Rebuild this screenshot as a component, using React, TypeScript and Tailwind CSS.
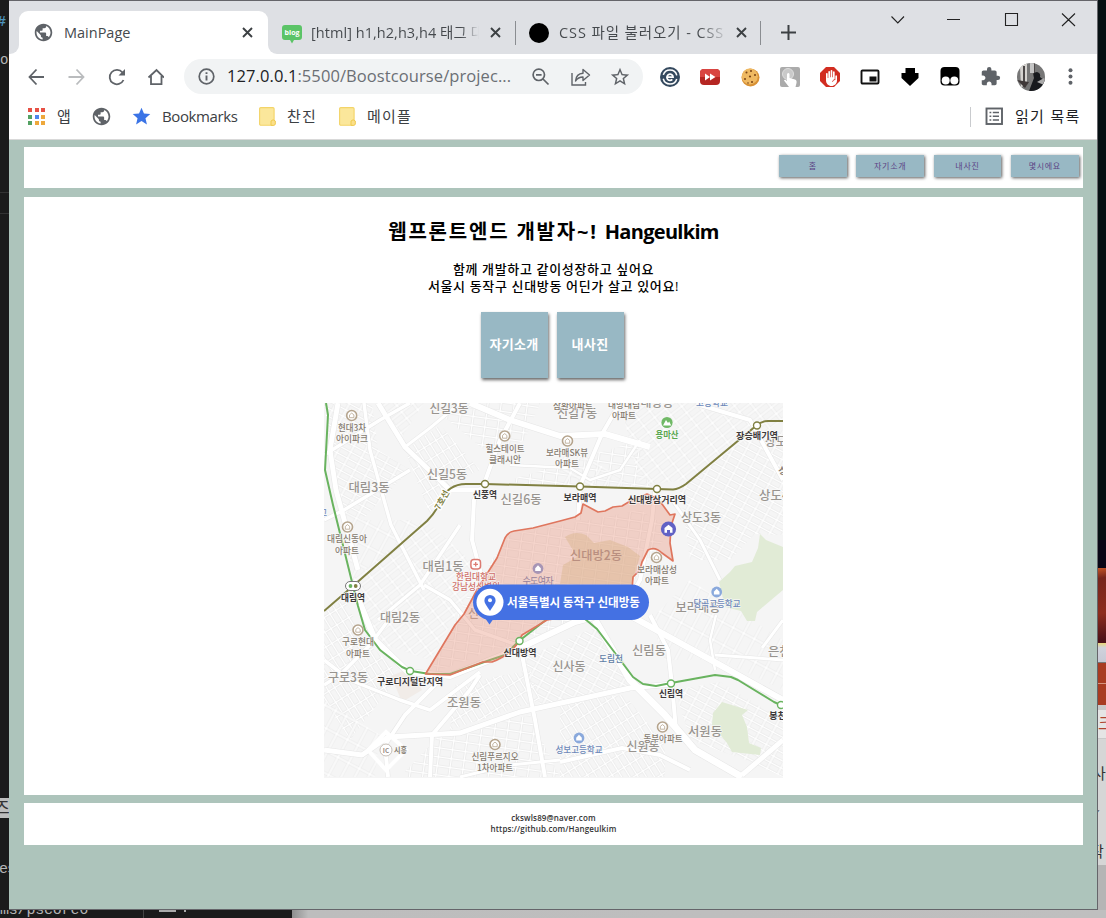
import React from "react";
import { MdPublic, MdStar, MdStarBorder, MdExtension, MdFrontHand } from "react-icons/md";

const kr = "font-['Open_Sans','Noto_Sans_CJK_KR',sans-serif]";

type LabelProps = { x: number; y: number; w: number; t: string; s?: number; c?: string; b?: boolean; start?: boolean };

function Label({ x, y, w, t, s = 9, c = "#857b70", b = false, start = false }: LabelProps) {
  return (
    <text
      x={x} y={y + s * 0.36} fontSize={s} fill={c} fontWeight={b ? 700 : 500}
      textAnchor={start ? "start" : "middle"} textLength={w} lengthAdjust="spacingAndGlyphs"
      stroke="#fafafa" strokeOpacity={0.8} strokeWidth={1.6} paintOrder="stroke" strokeLinejoin="round"
    >
      {t}
    </text>
  );
}

const GRAY = "#98948f";
const BLACK = "#3d3a3a";
const BLUE = "#6d88b9";

const districts: [number, number, number, string][] = [
  [449, 408, 39, "신길3동"], [447, 474, 40, "신길5동"], [521, 499, 41, "신길6동"], [369, 487, 41, "대림3동"],
  [443, 566, 41, "대림1동"], [577, 413, 40, "신길7동"], [701, 517, 40, "상도3동"], [400, 617, 40, "대림2동"],
  [348, 677, 40, "구로3동"], [464, 702, 34, "조원동"], [569, 666, 33, "신사동"], [698, 607, 45, "보라매동"],
  [649, 650, 34, "신림동"], [705, 731, 34, "서원동"], [643, 746, 33, "신원동"], [657, 402, 33, "대방동"],
];
const places: [number, number, number, string][] = [
  [352, 428, 28, "현대3차"], [352, 439, 32, "아이파크"], [505, 448.5, 39, "힐스테이트"], [505, 459.5, 32, "클래시안"],
  [347, 539, 40, "대림신동아"], [347, 550.5, 24, "아파트"], [573, 406, 40, "삼환아파트"], [624, 405, 32, "대방대림"],
  [624, 416, 24, "아파트"], [567, 453, 42, "보라매SK뷰"], [567, 464, 24, "아파트"], [657, 569.5, 40, "보라매삼성"],
  [657, 581, 24, "아파트"], [358, 642, 32, "구로현대"], [358, 653.5, 24, "아파트"], [495, 757, 47, "신림푸르지오"],
  [495, 768, 36, "1차아파트"], [663, 739, 39, "동부아파트"],
];
const stations: [number, number, number, string][] = [
  [485, 495, 24, "신풍역"], [580, 497.5, 33, "보라매역"], [657, 499.5, 58, "신대방삼거리역"], [757, 436, 42, "장승배기역"],
  [353, 598, 24, "대림역"], [410, 682, 66, "구로디지털단지역"], [520, 652.5, 33, "신대방역"], [671, 694, 24, "신림역"],
];
const homes: [number, number][] = [
  [351.7, 415.5], [504.7, 436], [347.5, 527], [358, 630], [495, 744.5], [567.5, 441], [656.5, 557.5], [662.5, 727],
];
const schools: [number, number][] = [[538, 568.5], [716.7, 592], [579, 738]];

const blocks: [string, string][] = [
  ["324,403 372,403 378,450 410,470 362,520 340,510", "a"],
  ["376,403 424,403 400,440", "b"],
  ["405,450 440,425 480,470 450,484 430,515", "c"],
  ["428,403 540,403 525,440 490,455", "d"],
  ["510,480 640,440 650,488 520,484", "d"],
  ["620,403 783,403 783,420 690,480 640,485", "b"],
  ["680,490 757,430 783,430 783,535 755,534 730,560 690,560", "a"],
  ["345,585 425,520 470,560 470,590 430,660 385,645", "b"],
  ["340,510 362,520 425,520 353,580", "e"],
  ["324,610 345,600 365,640 400,675 350,740 324,700", "c"],
  ["324,700 380,735 375,777 324,777", "e"],
  ["470,590 510,535 640,510 672,530 640,570 620,610 520,640 430,674", "d"],
  ["520,660 600,625 640,690 540,705", "a"],
  ["455,685 530,670 540,700 450,730", "c"],
  ["400,777 440,735 530,715 560,777", "d"],
  ["650,620 690,580 783,640 783,690 720,660 665,660", "e"],
  ["675,690 720,682 783,720 783,777 745,760 690,740", "a"],
  ["560,700 625,695 665,745 665,777 560,777", "c"],
  ["560,440 640,490 560,485", "e"],
];

const roads: [string, number][] = [
  ["M338 403 L330 450 L336 490 L358 570", 5],
  ["M364 403 L370 450 L391 525 L424 590", 3.5],
  ["M324 455 L380 420 L410 403", 3.5],
  ["M378 403 L405 447 L450 490 L480 490", 5],
  ["M405 447 L430 428 L460 403", 3],
  ["M470 403 L510 420 L560 436 L605 434 L650 447", 6],
  ["M520 403 L500 440 L484 484 L474 500 L472 540 L484 585", 4],
  ["M510 465 L570 468 L590 480 L620 470 L640 440", 2.5],
  ["M620 403 L602 434 L580 486 L578 520", 4],
  ["M324 520 L344 510 L410 470", 3.5],
  ["M378 620 L420 585 L460 525", 3.5],
  ["M353 586 L375 640 L408 672 L450 676 L520 648 L575 622 L620 610 L720 665 L783 700", 6],
  ["M424 585 L450 600 L475 630 L520 646", 3.5],
  ["M324 685 L340 675 L370 645 L390 618", 3.5],
  ["M324 660 L350 680 L400 700 L430 710 L480 672", 3.5],
  ["M324 750 L362 755 L388 737 L460 733 L520 712 L630 688 L672 684", 5],
  ["M388 777 L385 745 L405 715 L440 680", 4],
  ["M430 777 L432 735 L470 690 L480 675", 4],
  ["M522 655 L535 720 L545 777", 4],
  ["M595 620 L630 680 L665 715 L695 750 L742 777", 7],
  ["M650 615 L668 650 L672 685 L676 730", 4],
  ["M560 762 L622 748 L660 755 L690 770", 4],
  ["M742 775 L783 740", 5],
  ["M715 670 L710 640 L716 615", 2.5],
  ["M715 655 L783 660", 3],
  ["M783 620 L762 648", 3],
  ["M700 405 L750 420 L783 480", 4],
  ["M655 490 L652 520 L640 580 L620 615", 4],
  ["M672 500 L700 540 L720 580", 3],
  ["M460 777 L510 765 L560 760", 3],
];

const boundary =
  "M425.5 674 L455 625 L464 614 L478 588 L497 558 L505 538 Q508 532 514 531 L533 528 L560 521 L575 517 L581 513 L583 504 L598 512 L605 511 L613 507 L622 506 L632 500 L647 494 L654 497 L662 504 L670 515 L675 514 L671 526 L670 543 L673 561 L662 553 Q655 546 648 550 L642 562 L640 570 L633 577 L632 590 L600 612 L547 620 L522 635 L518 643 Q510 655 492 662 L483 662 L450 675Z";

const patterns: [string, number, number, number][] = [
  ["a", 28, 7, 12], ["b", -38, 8, 14], ["c", 58, 7, 13], ["d", 8, 9, 13], ["e", -62, 12, 20],
];

function MapPicture() {
  return (
    <svg
      className="mt-[25px] block h-[375px] w-[459px] font-['Noto_Sans_CJK_KR',sans-serif]"
      viewBox="324 403 459 375"
    >
      <defs>
        {patterns.map(([id, r, h, w]) => (
          <pattern key={id} id={`grid-${id}`} width={w} height={h} patternUnits="userSpaceOnUse" patternTransform={`rotate(${r})`}>
            <path d={`M0 ${h / 2}H${w} M${w / 2} 0V${h}`} stroke="#e3e3e3" strokeWidth="2.6" fill="none" />
            <path d={`M0 ${h / 2}H${w} M${w / 2} 0V${h}`} stroke="#ffffff" strokeWidth="1.5" fill="none" />
          </pattern>
        ))}
      </defs>
      <rect x="324" y="403" width="459" height="375" fill="#f5f5f5" />
      {blocks.map(([p, g], i) => <polygon key={i} points={p} fill={`url(#grid-${g})`} />)}
      <path d="M391 676 L410 668 L422 690 L402 702Z" fill="#f1ece8" />
      <path d="M760 534 L766 540 L783 547 V590 L757 612 L755 621 L747 621 L741 611 L725 607 L719 582 L730 572 L735 566 L752 562 L758 548Z M722 702 L748 710 L742 715 L747 727 L749 743 L761 748 L760 755 L732 752 L727 743 L712 725 L713 713Z" fill="#e1ebd6" />
      {roads.map(([d, w], i) => <path key={i} d={d} fill="none" stroke="#e6e6e6" strokeWidth={w + 1} strokeLinejoin="round" />)}
      {roads.map(([d, w], i) => <path key={i} d={d} fill="none" stroke="#fff" strokeWidth={w} strokeLinejoin="round" />)}
      <path d="M386 732 L406 750 L386 770 L368 750Z" fill="none" stroke="#fff" strokeWidth="4" />

      <g fill="none" strokeWidth="2" strokeLinejoin="round">
        <path stroke="#69b35f" d="M326 403 L328 415 L325 470 L333 505 L353 586 L358 606 L365 630 L380 650 L402 667 L411 671 L430 674 L450 674 L490 660 L505 655 L519 641 L547 619 L585 619 L597 629 L633 677 L643 684 L656 686 L671 683 L715 675 L731 677 L738 680 L774 702 L783 706" />
        <path stroke="#808042" d="M324 611 L353 586 L427 521 Q436 512 440 502 Q448 484 466 484 L485 484 L580 486.5 L657 489 L673 489.5 Q679 489 686 484 L757 425 Q762 421 768 421 H783" />
      </g>
      <path d={boundary} fill="#e9967f" fillOpacity=".4" />
      <path d="M565 537 Q575 530 586 535 L594 543 L610 540 L628 547 L640 556 L632 584 H560 L563 565 L577 557Z" fill="#d6b181" fillOpacity=".38" />
      <path d={boundary} fill="none" stroke="#df765e" strokeWidth="1.7" strokeLinejoin="round" />

      {districts.map(([x, y, w, t]) => <Label key={t} x={x} y={y} w={w} t={t} s={12.5} c={GRAY} />)}
      <Label x={765} y={441} w={28} t="상도1" s={12.5} c={GRAY} start />
      <Label x={759} y={495} w={30} t="상도4" s={12.5} c={GRAY} start />
      <Label x={768} y={651} w={34} t="은천동" s={12.5} c={GRAY} start />
      <Label x={778} y={471} w={24} t="상도" s={9} start />
      <text x="596" y="560" fontSize="12.5" fill="#b98f80" textAnchor="middle" textLength="52" lengthAdjust="spacingAndGlyphs" fontWeight="500">신대방2동</text>
      <text x="468" y="618" fontSize="12" fill="#b98f80">신대방1동</text>
      {places.map(([x, y, w, t], i) => <Label key={i} x={x} y={y} w={w} t={t} />)}
      <Label x={476} y={576.5} w={40} t="한림대학교" c="#cf7069" />
      <Label x={476} y={587} w={48} t="강남성심병원" c="#cf7069" />
      <text x="538" y="584" fontSize="9" fill="#97819a" textAnchor="middle" textLength="31">수도여자</text>
      <Label x={712} y={403} w={32} t="고등학교" c={BLUE} />
      <Label x={717} y={604} w={47} t="당곡고등학교" c={BLUE} />
      <Label x={579} y={750} w={47} t="성보고등학교" c={BLUE} />
      <Label x={611} y={659} w={24} t="도림천" c="#5f7da6" />
      <Label x={667} y={434.5} w={23} t="용마산" c="#5aa851" b />
      <Label x={320} y={513} w={7} t="고" c={BLUE} start />

      {homes.map(([x, y]) => (
        <g key={x}>
          <circle cx={x} cy={y} r="5" fill="#fff" stroke="#b5a48d" strokeWidth="1.6" />
          <path d={`M${x - 2.2} ${y + 2.2} V${y - 0.6} L${x} ${y - 2.4} L${x + 2.2} ${y - 0.6} V${y + 2.2}Z`} fill="none" stroke="#b5a48d" strokeWidth=".8" />
        </g>
      ))}
      {schools.map(([x, y]) => (
        <g key={x}>
          <circle cx={x} cy={y} r="5.4" fill={x === 538 ? "#a795b5" : "#8aa9dc"} />
          <path d={`M${x - 2.8} ${y + 2.6} V${y - 0.2} L${x} ${y - 3.2} L${x + 2.8} ${y - 0.2} V${y + 2.6}Z`} fill="#fff" />
        </g>
      ))}
      <circle cx="667" cy="422.5" r="5.6" fill="#70b966" />
      <path d="M663 425.5 L666 420 L668 423 L669.2 421.5 L671.2 425.5Z" fill="#fff" />
      <rect x="470.9" y="559.4" width="9.6" height="9.6" rx="3" fill="#fff" stroke="#dc7b72" strokeWidth="1.5" />
      <path d="M475.7 562 V566.6 M473.4 564.3 H478" stroke="#dc7b72" strokeWidth="1.3" />

      {[[485, 484], [580, 486.5], [657, 489], [757, 425.5]].map(([x, y]) => <circle key={x} cx={x} cy={y} r="3.5" fill="#fff" stroke="#808042" strokeWidth="1.4" />)}
      {[[410, 671], [519.5, 641], [671, 683.5], [781, 705]].map(([x, y]) => <circle key={x} cx={x} cy={y} r="3.5" fill="#fff" stroke="#69b35f" strokeWidth="1.4" />)}
      <rect x="345.5" y="581.5" width="15" height="9" rx="4.5" fill="#fff" stroke="#777" strokeWidth="1" />
      <circle cx="350.5" cy="586" r="1.9" fill="#69b35f" /><circle cx="355.7" cy="586" r="1.9" fill="#808042" />
      {stations.map(([x, y, w, t]) => <Label key={t} x={x} y={y} w={w} t={t} c={BLACK} b />)}
      <Label x={769} y={716} w={26} t="봉천역" c={BLACK} b start />
      <g transform="translate(442 500) rotate(-61)">
        <text y="3" fontSize="8.5" fontWeight="700" fill="#80803f" stroke="#fff" strokeWidth="2.5" paintOrder="stroke" textAnchor="middle">7호선</text>
      </g>
      <circle cx="386" cy="750" r="6" fill="#fff" stroke="#c5bdb5" />
      <text x="386" y="752.5" fontSize="6.5" fontWeight="700" fill="#958a80" textAnchor="middle">IC</text>
      <Label x={400.5} y={750} w={13} t="시흥" s={8} b />

      <circle cx="668.5" cy="529" r="7.6" fill="#6162c5" />
      <path d="M664.5 532.8 V528 L668.5 524.8 L672.5 528 V532.8 H670 V530 H667 V532.8Z" fill="#fff" />
      <path d="M485 618 L489.5 624.5 L494 618Z" fill="#4471e3" />
      <rect x="473" y="584.5" width="176" height="35.5" rx="17.7" fill="#4471e3" />
      <circle cx="490" cy="602.3" r="13.5" fill="#fff" />
      <path d="M490 611 C487 606 484.4 603.5 484.4 600.5 A5.6 5.6 0 0 1 495.6 600.5 C495.6 603.5 493 606 490 611Z" fill="#4471e3" />
      <circle cx="490" cy="600.3" r="2" fill="#fff" />
      <text x="507" y="606.8" fontSize="12" fontWeight="700" fill="#fff" textLength="133" lengthAdjust="spacingAndGlyphs">서울특별시 동작구 신대방동</text>
    </svg>
  );
}

function Cross({ className = "" }: { className?: string }) {
  return (
    <svg className={`h-[11px] w-[11px] shrink-0 ${className}`} viewBox="0 0 11 11">
      <path d="M1 1 L10 10 M10 1 L1 10" stroke="#3c4043" strokeWidth="1.9" />
    </svg>
  );
}

function TabStrip() {
  return (
    <div className="flex h-[53px] bg-[#dee0e4]">
      <div className="flex w-[10px] items-end bg-white"><div className="h-full w-full rounded-br-[9px] bg-[#dee0e4]" /></div>
      <div className="flex w-[249px] bg-[#dee0e4] pt-[10px]">
        <div className="flex w-full items-center rounded-t-[9px] bg-white pr-[15px] pl-[15px]">
          <MdPublic className="h-[21px] w-[21px] shrink-0 -translate-x-px text-[#5f6368]" />
          <span className="ml-[9px] flex-1 text-[14.5px] text-[#45494d]">MainPage</span>
          <Cross />
        </div>
      </div>
      <div className="flex flex-1 bg-white"><div className="flex flex-1 rounded-bl-[9px] bg-[#dee0e4]">
        <div className="flex h-[53px] w-[247px] items-center pt-[10px] pl-[14px]">
          <svg className="mt-[3px] h-[19px] w-5 shrink-0" viewBox="0 0 20 19">
            <path d="M3 0 H17 Q20 0 20 3 V12 Q20 15 17 15 H12 L10 18.5 L8 15 H3 Q0 15 0 12 V3 Q0 0 3 0Z" fill="#5bc467" />
            <text x="10" y="9.5" fontSize="7" fontWeight="700" fill="#fff" textAnchor="middle" fontFamily="Open Sans">blog</text>
          </svg>
          <span className="ml-[9px] w-[170px] shrink-0 overflow-hidden bg-[linear-gradient(to_right,#45494d_88%,transparent_99%)] bg-clip-text text-[14.5px] tracking-[0.05px] whitespace-nowrap text-transparent">[html] h1,h2,h3,h4 태그 대</span>
          <Cross className="ml-[9px]" />
          <i className="ml-[14px] h-6 w-px shrink-0 bg-[#8a8d91]" />
        </div>
        <div className="flex h-[53px] w-[245px] items-center pt-[10px] pl-[14px]">
          <i className="h-5 w-5 shrink-0 rounded-full bg-black" />
          <span className="ml-[10px] w-[167px] shrink-0 overflow-hidden bg-[linear-gradient(to_right,#45494d_84%,transparent_102%)] bg-clip-text text-[14.5px] tracking-[0.9px] whitespace-nowrap text-transparent">CSS 파일 불러오기 - CSS</span>
          <Cross className="ml-[10px]" />
          <i className="ml-[13px] h-6 w-px shrink-0 bg-[#8a8d91]" />
        </div>
        <svg className="mt-[24px] ml-[21px] h-[15px] w-[15px] shrink-0" viewBox="0 0 15 15"><path d="M7.5 0V15M0 7.5H15" stroke="#3c4043" strokeWidth="2" /></svg>
        <svg className="mt-[12px] ml-[95px] h-[14px] w-[186px] shrink-0" viewBox="0 0 186 14" fill="none" stroke="#222" strokeWidth="1.1">
          <path d="M.5 3.5 L6.8 10 L13 3.5 M56 6.5 H69 M114.500 .5 H126.500 V12.500 H114.500Z M171 .5 L184 13 M184 .5 L171 13" />
        </svg>
      </div></div>
    </div>
  );
}

function Toolbar() {
  return (
    <div className="flex h-[45px] items-center pl-[19px]">
      <svg className="h-[18px] w-[136px] shrink-0" viewBox="0 0 136 18" fill="none" stroke="#5f6368" strokeWidth="1.8">
        <path d="M16 9 H1.500 M8.500 1.500 L1.500 9 L8.500 16.500" />
        <path d="M40.500 9 H55.500 M48.500 1.500 L55.500 9 L48.500 16.500" stroke="#babcbe" />
        <path d="M94.500 4.500 A7.200 7.200 0 1 0 95.500 12" />
        <path d="M97 1 V7.500 H90.500Z" fill="#5f6368" stroke="none" />
        <path d="M120.500 9.500 L128.500 2 L136 9.500 M123 8 V16.200 H133.500 V8" />
      </svg>
      <div className="ml-5 flex h-[35px] w-[459px] shrink-0 items-center rounded-full bg-[#f1f3f4] pl-[14px]">
        <svg className="h-[17px] w-[17px] shrink-0" viewBox="0 0 17 17" fill="none" stroke="#5f6368"><circle cx="8.500" cy="8.500" r="7.300" strokeWidth="1.700" /><path d="M8.500 7.500V12.500M8.500 4.200V6" strokeWidth="1.900" /></svg>
        <span className="ml-[12px] w-[300px] shrink-0 text-[16.5px] tracking-[0.09px] whitespace-nowrap text-[#6b6f74]"><span className="text-[#202124]">127.0.0.1</span>:5500/Boostcourse/projec...</span>
        <svg className="ml-[5px] h-[18px] w-[18px] shrink-0" viewBox="0 0 18 18" fill="none" stroke="#5f6368" strokeWidth="1.700"><circle cx="6.800" cy="6.800" r="5.700" /><path d="M11 11 L16.500 16.500 M4 6.800 H9.600" /></svg>
        <svg className="ml-[21px] h-[18px] w-[20px] shrink-0" viewBox="0 0 20 18" fill="none" stroke="#5f6368" strokeWidth="1.400"><path d="M1 5 V17 H14.500 V14" /><path d="M4.500 13 C5 8 8 5.500 12 5.300 V1.500 L18.500 7 L12 12.500 V9 C8.500 9 6.500 10 4.500 13Z" strokeLinejoin="round" /></svg>
        <MdStarBorder className="ml-[18px] h-[22px] w-[22px] shrink-0 text-[#5f6368]" />
      </div>
      <div className="ml-[17px] flex w-[341px] shrink-0 items-center justify-between">
        <svg className="h-5 w-5" viewBox="0 0 20 20"><circle cx="10" cy="10" r="10" fill="#34495e" /><circle cx="10" cy="10" r="7" fill="none" stroke="#fff" strokeWidth="1.500" strokeDasharray="18 4" strokeDashoffset="-2" /><path d="M6.900 10.200 H13.100 A3.100 3.100 0 1 0 12.300 12.400" fill="none" stroke="#fff" strokeWidth="1.700" /></svg>
        <svg className="h-[16px] w-5" viewBox="0 0 20 16"><rect width="20" height="16" rx="4" fill="#b52622" /><path d="M0 8V4Q0 0 4 0H16Q20 0 20 4V8Z" fill="#d94541" /><path d="M5 4.500 L10 8 L5 11.500Z M10 4.500 L15.500 8 L10 11.500Z" fill="#fff" /></svg>
        <svg className="h-5 w-5" viewBox="0 0 20 20"><circle cx="10.500" cy="10.500" r="9" fill="#d89135" /><circle cx="9.800" cy="9.400" r="8" fill="#efb962" /><g fill="#784215"><circle cx="6.500" cy="5.500" r="1" /><circle cx="11" cy="4" r="1" /><circle cx="10" cy="9.500" r="1.100" /><circle cx="15" cy="8" r="1" /><circle cx="5" cy="12" r="1" /><circle cx="12" cy="15" r="1" /><circle cx="8" cy="16" r=".8" /></g></svg>
        <svg className="h-5 w-5" viewBox="0 0 20 20"><rect width="20" height="20" rx="2" fill="#ababab" /><circle cx="8" cy="7" r="5.500" fill="#c9c9c9" stroke="#dedede" /><path d="M7 7 Q8.500 5 9.500 7 V11 L15 12.500 Q17 13 16.500 16 L15.500 20 H9 L4 13.500 Q4.500 12 7 14Z" fill="#fff" /></svg>
        <svg className="h-5 w-5" viewBox="0 0 20 20"><path d="M6 0H14L20 6V14L14 20H6L0 14V6Z" fill="#d22d21" /><MdFrontHand x="3" y="3" width="14" height="14" color="#fff" /></svg>
        <svg className="h-4 w-5" viewBox="0 0 20 16"><rect x="1.500" y="1.500" width="17" height="13" rx="1" fill="none" stroke="#111" strokeWidth="1.900" /><rect x="9.500" y="7.500" width="7" height="5" fill="#111" /></svg>
        <svg className="h-[18px] w-5" viewBox="0 0 20 18"><path d="M5.500 0H15V5H18.500V10L10 18L1.500 10V5H5.500Z" fill="#000" /></svg>
        <svg className="h-[19px] w-5" viewBox="0 0 20 19"><rect x=".5" width="19" height="18.500" rx="4" fill="#000" /><circle cx="5.700" cy="13.500" r="4" fill="#fff" /><circle cx="14.300" cy="13.500" r="4" fill="#fff" /></svg>
        <MdExtension className="h-[21px] w-[21px] text-[#5f6368]" />
      </div>
      <svg className="ml-4 h-7 w-7 shrink-0" viewBox="0 0 28 28">
        <clipPath id="face"><circle cx="14" cy="14" r="14" /></clipPath>
        <g clipPath="url(#face)"><rect width="28" height="28" fill="#777" /><path d="M3 3 L10 0 V22 L4 24Z" fill="#d5d3d0" /><path d="M7 3V24M17 0V12" stroke="#4c4848" strokeWidth="2" /><path d="M12 28 L17 15 Q15 9 20 9 Q24 10 23 14 L28 18 V28Z" fill="#17191d" /><path d="M13 0H17V10H13Z" fill="#c5c5c5" /><path d="M20 19 L27 15 V22Z" fill="#aaa" /><path d="M0 17 L8 25 L12 19Z" fill="#3f3838" /></g>
      </svg>
      <svg className="ml-[23px] h-[17px] w-[5px] shrink-0" viewBox="0 0 5 17" fill="#5f6368"><circle cx="2.500" cy="2.200" r="2" /><circle cx="2.500" cy="8.500" r="2" /><circle cx="2.500" cy="14.800" r="2" /></svg>
    </div>
  );
}

function Folder({ className = "" }: { className?: string }) {
  return (
    <svg className={`h-[19px] w-[17px] shrink-0 ${className}`} viewBox="0 0 17 19">
      <rect x=".6" y=".6" width="14.500" height="17.600" rx="1.200" fill="#fbe79b" stroke="#f3d468" strokeWidth="1.100" />
      <path d="M12 18.300 V14 Q14 11.500 16.300 14 V17 Q16 18.400 14.500 18.400Z" fill="#fbe08a" stroke="#efc94f" />
    </svg>
  );
}

function Bookmarks() {
  const dots = ["#e75145", "#e75145", "#e75145", "#54a163", "#4f86ec", "#eea83c", "#54a163", "#eea83c", "#eea83c"];
  return (
    <div className="flex h-[41px] items-center border-b border-[#d9d9d9] pb-[5px] pl-[19px] text-[15px] whitespace-nowrap text-[#3c4043]">
      <div className="grid w-[17px] shrink-0 grid-cols-3 gap-[2.500px]">{dots.map((c, i) => <i key={i} className="h-1 w-1" style={{ background: c }} />)}</div>
      <span className="ml-[12px] w-[34px]">앱</span>
      <MdPublic className="h-[21px] w-[21px] text-[#5f6368]" />
      <MdStar className="ml-[19px] h-[21px] w-[21px] text-[#3b74e6]" />
      <span className="ml-[10px] w-[97px] tracking-[-0.4px]">Bookmarks</span>
      <Folder /><span className="ml-[11px] w-[52px] tracking-[1.2px]">찬진</span>
      <Folder /><span className="ml-[11px] flex-1 tracking-[1.2px]">메이플</span>
      <i className="mr-[14px] h-5 w-px bg-[#c9cbce]" />
      <svg className="h-[19px] w-[19px]" viewBox="0 0 19 19" fill="none" stroke="#5f6368" strokeWidth="1.900"><rect x="1.500" y="1.500" width="15.500" height="15.500" /><path d="M4.500 5.500H6.300M7.800 5.500H14M4.500 9.300H6.300M7.800 9.300H14M4.500 13H6.300M7.800 13H14" strokeWidth="1.500" /></svg>
      <span className="ml-[11px] w-[82px] tracking-[1.3px] text-[#202124]">읽기 목록</span>
    </div>
  );
}

function NavButton({ label }: { label: string }) {
  return <a className="flex h-[22px] w-[67.500px] items-center justify-center bg-[#98b8c4] text-[8px] tracking-[0.7px] text-[#5c4385] shadow-[1px_1px_3px_rgba(0,0,0,0.65)]">{label}</a>;
}

function Tile({ label }: { label: string }) {
  return <a className="flex h-[66px] w-[67px] items-center justify-center bg-[#98b8c4] text-[13px] font-bold tracking-[0.3px] text-white shadow-[1px_2px_3px_rgba(0,0,0,0.6)]">{label}</a>;
}

export default function App() {
  return (
    <div className={`flex h-[918px] w-[1106px] flex-col overflow-hidden bg-[#1b1b1b] ${kr}`}>
      <div className="flex h-[910px] shrink-0">
        <aside className="flex w-[9px] shrink-0 flex-col overflow-hidden font-['Liberation_Mono',monospace] text-[15px] leading-5 text-[#b5b5b5]">
          <span className="mt-[13px] -ml-[3px] font-bold text-[#4d93bd]">#</span>
          <span className="mt-[17px] text-[14px]">o</span>
          <i className="mt-[122px] h-px shrink-0 bg-[#333]" /><i className="mt-5 h-px shrink-0 bg-[#333]" />
          <span className="mt-[584px] h-[20px] shrink-0 bg-[#bdbdbd] font-['Noto_Sans_CJK_KR'] text-[17px] leading-[18px] -indent-[6px] text-[#333]">즈</span>
          <span className="mt-[42px] -ml-px tracking-[-1px] whitespace-nowrap">es</span>
        </aside>
        <div className="flex w-[1089px] shrink-0 flex-col border-t border-r border-b border-[#65656a] bg-white">
          <TabStrip />
          <Toolbar />
          <Bookmarks />
          <div className="flex flex-1 flex-col bg-[#adc4bb] pt-[7px] pr-[14px] pl-[15px]">
            <nav className="flex h-[41px] shrink-0 justify-end gap-[9.800px] bg-white pt-2 pr-[4.500px]">
              {["홈", "자기소개", "내사진", "몇시에요"].map((l) => <NavButton key={l} label={l} />)}
            </nav>
            <main className="mt-[9px] flex h-[598px] shrink-0 flex-col items-center bg-white pt-[20px] text-black">
              <h1 className="text-[20px] leading-[30px] font-bold whitespace-nowrap"><span className="tracking-[1.800px]">웹프론트엔드 개발자~! </span><span className="tracking-[-0.700px]">Hangeulkim</span></h1>
              <h2 className="mt-[14px] text-center text-[13px] leading-[17px] font-medium tracking-[0.650px] whitespace-nowrap">함께 개발하고 같이성장하고 싶어요<br />서울시 동작구 신대방동 어딘가 살고 있어요!</h2>
              <div className="mt-[17px] flex gap-[9px] pr-[3px]"><Tile label="자기소개" /><Tile label="내사진" /></div>
              <MapPicture />
            </main>
            <footer className="mt-2 flex h-[42px] shrink-0 flex-col items-center bg-white pt-[9px] text-[8px] leading-[11px] font-semibold tracking-[0.130px] text-[#333]">
              <span>ckswls89@naver.com</span><span>https://github.com/Hangeulkim</span>
            </footer>
          </div>
        </div>
        <aside className="flex w-2 shrink-0 flex-col overflow-hidden bg-[#050f12] text-[#333]">
          <div className="mt-[540px] h-[28px] shrink-0 bg-[#080515]" />
          <div className="h-[75px] shrink-0 bg-[linear-gradient(170deg,#c45426_0%,#76251c_14%,#8c2c1d_60%,#4d1219_95%)]" />
          <div className="h-[19px] shrink-0 bg-[linear-gradient(#e9d67a,#d0d2dc_25%,#c7c9d5)]" />
          <div className="h-[43px] shrink-0 border-t border-[#777] bg-[#a83c22] pt-5"><div className="h-px bg-[#d5957f]" /></div>
          <div className="h-[34px] shrink-0 border-t-[5px] border-b border-[#c9c9c9] bg-[#e5e5e5] text-[17px] leading-7 text-[#b04430]">크</div>
          <div className="flex h-[126px] shrink-0 flex-col bg-[#d6d6d6] text-[15px]"><span className="mt-[23px] -ml-[6px]">사</span><span className="mt-[22px] -ml-[5px] text-[9px]">✓</span><span className="mt-[20px] -ml-[8px]">작</span></div>
          <div className="flex-1 bg-[#b5b5b5]" />
        </aside>
      </div>
      <div className="flex h-2 shrink-0 overflow-hidden">
        <div className="flex w-[292px] overflow-hidden font-['Liberation_Mono',monospace] text-[15px] leading-[2px] whitespace-nowrap text-[#b5b5b5]">
          <span className="w-[144px] border-r border-[#444] tracking-[-0.200px]">ms/pscore6</span><i className="ml-[15px] h-[2px] w-[17px] bg-[#aaa]" /><i className="ml-2 h-[2px] w-[2px] bg-[#aaa]" />
        </div>
        <div className="flex-1 bg-[linear-gradient(to_right,#8e8e8e,#bdbdbd_2%,#bfbfbf)]" />
      </div>
    </div>
  );
}
